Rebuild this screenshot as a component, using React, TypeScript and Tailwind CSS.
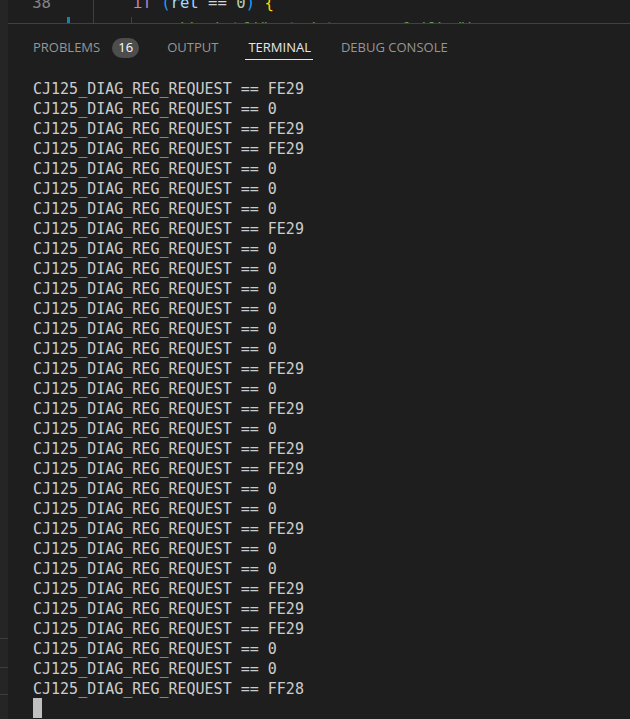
import React from 'react';

const mono = { fontFamily: '"DejaVu Sans Mono", "Liberation Mono", monospace' };

const values = [
  'FE29', '0', 'FE29', 'FE29', '0', '0', '0', 'FE29', '0', '0', '0', '0', '0', '0', 'FE29', '0',
  'FE29', '0', 'FE29', 'FE29', '0', '0', 'FE29', '0', '0', 'FE29', 'FE29', 'FE29', '0', '0', 'FF28',
];

const Tab: React.FC<{ label: string; active?: boolean; badge?: string }> = ({ label, active, badge }) => (
  <div className={`relative flex items-center h-full ${badge ? '-mr-[2px]' : ''}`}>
    <span className={`text-[13px] ${active ? 'text-[#e7e7e7]' : 'text-[#969696]'}`}>{label}</span>
    {badge && (
      <span className="ml-[12px] flex items-center justify-center w-[27px] h-[20px] rounded-full bg-[#4d4d4d] text-white text-[13px]">
        {badge}
      </span>
    )}
    {active && <div className="absolute left-[-3px] right-[-2px] bottom-[10px] h-px bg-[#e7e7e7]" />}
  </div>
);

export default function App() {
  return (
    <div className="w-[630px] h-[719px] bg-[#1e1e1e] flex overflow-hidden" style={{ fontFamily: '"Open Sans", "Noto Sans", sans-serif' }}>
      {/* side strip */}
      <div className="w-[8px] shrink-0 bg-[#252526] flex flex-col">
        <div className="mt-[638px] h-px bg-[#3c3c3c]" />
        <div className="mt-[28px] h-px bg-[#3c3c3c]" />
        <div className="mt-[26px] h-px bg-[#3c3c3c]" />
      </div>

      <div className="flex-1 flex flex-col min-w-0">
        {/* editor peek */}
        <div className="h-[23px] shrink-0 overflow-hidden relative text-[15.6px] leading-[23px]" style={mono}>
          <div className="absolute left-[85px] top-0 bottom-0 w-px bg-[#404040]" />
          <div className="absolute left-[123px] top-[17px] bottom-0 w-px bg-[#404040]" />
          <div className="absolute left-[59px] top-[17px] bottom-0 w-[3px] bg-[#1b81a8]" />
          <div className="-mt-[8px]">
            <div className="flex whitespace-pre">
              <span className="w-[43px] text-right text-[#858585]">38</span>
              <span className="ml-[82px]">
                <span className="text-[#c586c0]">if</span>
                <span className="text-[#d4d4d4]"> </span>
                <span className="text-[#179fff]">(</span>
                <span className="text-[#9cdcfe]">ret</span>
                <span className="text-[#d4d4d4]"> == </span>
                <span className="text-[#b5cea8]">0</span>
                <span className="text-[#179fff]">)</span>
                <span className="text-[#d4d4d4]"> </span>
                <span className="text-[#ffd700]">{'{'}</span>
              </span>
            </div>
            <div className="flex whitespace-pre mt-[3px]">
              <span className="w-[43px]" />
              <span className="ml-[124px] text-[#6a9955]">{'//printf("ret data = %s fail\\n");'}</span>
            </div>
          </div>
        </div>
        <div className="h-px bg-[#414141] shrink-0" />

        {/* panel tabs */}
        <div className="h-[46px] shrink-0 flex items-center pl-[25px] pt-[2px] gap-[30px]">
          <Tab label="PROBLEMS" badge="16" />
          <Tab label="OUTPUT" />
          <Tab label="TERMINAL" active />
          <Tab label="DEBUG CONSOLE" />
        </div>

        {/* terminal */}
        <div className="pt-[9px] pl-[25px] text-[15px] leading-[20px] text-[#cccccc]" style={mono}>
          {values.map((v, i) => (
            <div key={i} className="whitespace-pre">{`CJ125_DIAG_REG_REQUEST == ${v}`}</div>
          ))}
          <div className="-mt-[1px] w-[9px] h-[20px] bg-[#c0c0c0]" />
        </div>
      </div>
    </div>
  );
}
